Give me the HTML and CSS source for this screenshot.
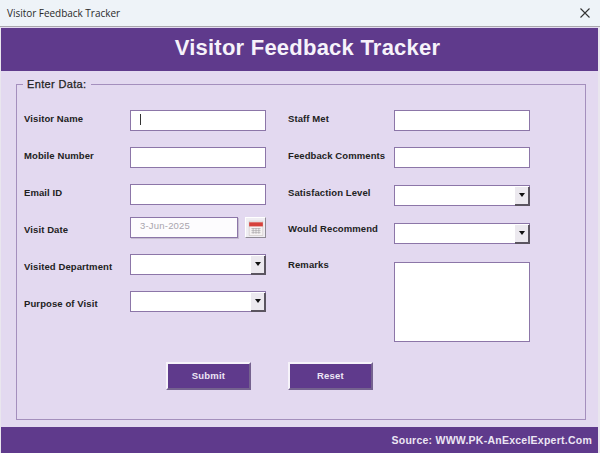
FILE: index.html
```html
<!DOCTYPE html>
<html lang="en">
<head>
<meta charset="utf-8">
<title>Visitor Feedback Tracker</title>
<link rel="stylesheet" href="styles.css">
</head>
<body>
<div class="window">
  <div class="titlebar">
    <span class="titlebar-text">Visitor Feedback Tracker</span>
    <svg class="close" viewBox="0 0 12 12" width="12" height="12"><path d="M1.5 1.5 10.5 10.5M10.5 1.5 1.5 10.5" fill="none" stroke="#333" stroke-width="1.1"/></svg>
  </div>
  <div class="client">
    <header class="banner">Visitor Feedback Tracker</header>
    <main class="content">
      <fieldset class="group">
        <legend class="legend">Enter Data:</legend>
        <div class="columns">
          <div class="col col-left">
            <div class="row up"><span class="label">Visitor Name</span><div class="field"><span class="caret"></span></div></div>
            <div class="row up"><span class="label">Mobile Number</span><div class="field"></div></div>
            <div class="row up"><span class="label">Email ID</span><div class="field"></div></div>
            <div class="row down date-row">
              <span class="label">Visit Date</span>
              <div class="field date">3-Jun-2025</div>
              <div class="calbtn">
                <svg viewBox="0 0 14 14" width="16" height="16">
                  <rect x="1" y="1" width="12" height="12.5" fill="#f6f3f3" stroke="#cfc9c9" stroke-width=".6"/>
                  <rect x="1" y="2" width="12" height="3.6" fill="#d6423c"/>
                  <path d="M3 7.5h8M3 9.3h8M3 11.1h8M4.5 7v5M7 7v5M9.5 7v5" stroke="#a9a5a9" stroke-width=".6" fill="none"/>
                </svg>
              </div>
            </div>
            <div class="row down"><span class="label">Visited Department</span><div class="field combo"><span class="drop"><span class="arrow"></span></span></div></div>
            <div class="row down"><span class="label">Purpose of Visit</span><div class="field combo"><span class="drop"><span class="arrow"></span></span></div></div>
          </div>
          <div class="col col-right">
            <div class="row up"><span class="label">Staff Met</span><div class="field"></div></div>
            <div class="row r2 up"><span class="label">Feedback Comments</span><div class="field"></div></div>
            <div class="row r3"><span class="label">Satisfaction Level</span><div class="field combo"><span class="drop"><span class="arrow"></span></span></div></div>
            <div class="row r4"><span class="label">Would Recommend</span><div class="field combo"><span class="drop"><span class="arrow"></span></span></div></div>
            <div class="row r5"><span class="label">Remarks</span><div class="field area"></div></div>
          </div>
        </div>
        <div class="actions">
          <button class="btn" type="button">Submit</button>
          <button class="btn" type="button">Reset</button>
        </div>
      </fieldset>
    </main>
    <footer class="footer">Source: WWW.PK-AnExcelExpert.Com</footer>
  </div>
</div>
</body>
</html>
```
FILE: styles.css
```css
* { box-sizing: border-box; }
html, body { margin: 0; padding: 0; }
body { width: 600px; height: 453px; overflow: hidden; font-family: "Liberation Sans", Arial, sans-serif; background: #e9e6ee; }
.window { width: 600px; height: 453px; display: flex; flex-direction: column; }
.titlebar { height: 27px; flex: none; background: #eef3f8; border-bottom: 1px solid #a9a7ad; display: flex; align-items: center; justify-content: space-between; padding: 0 9px 1px 7px; }
.titlebar-text { font-family: "Open Sans", sans-serif; font-size: 10px; letter-spacing: -0.03px; color: #2a2a2a; }
.client { flex: 1; display: flex; flex-direction: column; margin: 0 2px 0 1px; background: #e3d9f0; }
.banner { height: 43px; flex: none; margin-top: 1px; background: #5f3a8c; color: #f6f2fa; font-size: 22px; font-weight: bold; letter-spacing: 0.23px; display: flex; align-items: center; justify-content: center; padding: 0 0 3px 16px; }
.content { flex: 1; padding: 7px 12px 7px 15px; display: flex; min-height: 0; }
.group { flex: 1; margin: 0; padding: 0 0 0 7px; border: 1px solid #a48fbd; border-radius: 0; min-width: 0; display: block; }
.legend { padding: 0 4px; margin-left: -1px; font-size: 11px; font-weight: normal; color: #222; letter-spacing: 0.35px; line-height: 13px; -webkit-text-stroke: 0.25px #222; }
.columns { display: flex; margin-top: 19px; gap: 22px; height: 232px; }
.col { display: flex; flex-direction: column; width: 242px; }
.col-left { gap: 16px; }
.row { display: flex; align-items: center; height: 21px; flex: none; }
.label { width: 106px; flex: none; font-size: 9.5px; font-weight: bold; letter-spacing: 0.1px; color: #222; position: relative; }
.up .label { top: -2.5px; }
.down .label { top: 1.5px; }
.date-row { margin-top: -4px; }
.field { width: 136px; height: 21px; background: #fff; border: 1px solid #8c76a8; flex: none; display: flex; align-items: center; }
.caret { display: block; width: 1px; height: 11px; background: #333; margin-left: 9px; margin-top: -2px; }
.date { width: 108px; padding: 0 0 5px 9px; font-size: 9.5px; color: #a9a5ad; background: #fdfcfe; letter-spacing: 0.2px; box-shadow: 1px 1px 0 #c5bcd0; }
.calbtn { width: 21px; height: 21px; margin-left: 7px; background: #f0eef3; border: 1px solid; border-color: #fff #8f8a95 #8f8a95 #fff; display: flex; align-items: center; justify-content: center; }
.combo { justify-content: flex-end; }
.drop { width: 15px; height: 100%; background: #ece9ef; border-right: 2px solid #5b5560; border-bottom: 2px solid #5b5560; display: flex; align-items: center; justify-content: center; margin: 0 -1px -1px 0; }
.arrow { width: 0; height: 0; border-left: 3.5px solid transparent; border-right: 3.5px solid transparent; border-top: 4px solid #111; }
.r2 { margin-top: 16px; }
.r3 { margin-top: 17px; }
.r3 .label { top: -3.5px; }
.r4 { margin-top: 17px; }
.r4 .label { top: -5px; }
.r5 { margin-top: 18px; height: 80px; align-items: flex-start; }
.r5 .label { top: -3px; }
.area { height: 80px; }
.actions { display: flex; gap: 37px; margin-top: 20px; padding-left: 142px; }
.btn { width: 85px; height: 28px; padding: 0 0 1px; background: #5f3a8c; color: #ede5f5; font-family: "Liberation Sans", sans-serif; font-size: 9.5px; font-weight: bold; letter-spacing: 0.2px; border: 2px solid; border-color: #f6f3fa #75628f #75628f #f6f3fa; }
.footer { height: 26px; flex: none; background: #5f3a8c; color: #ece6f4; font-size: 10.5px; font-weight: bold; letter-spacing: 0.25px; display: flex; align-items: center; justify-content: flex-end; padding-right: 6px; }
```
